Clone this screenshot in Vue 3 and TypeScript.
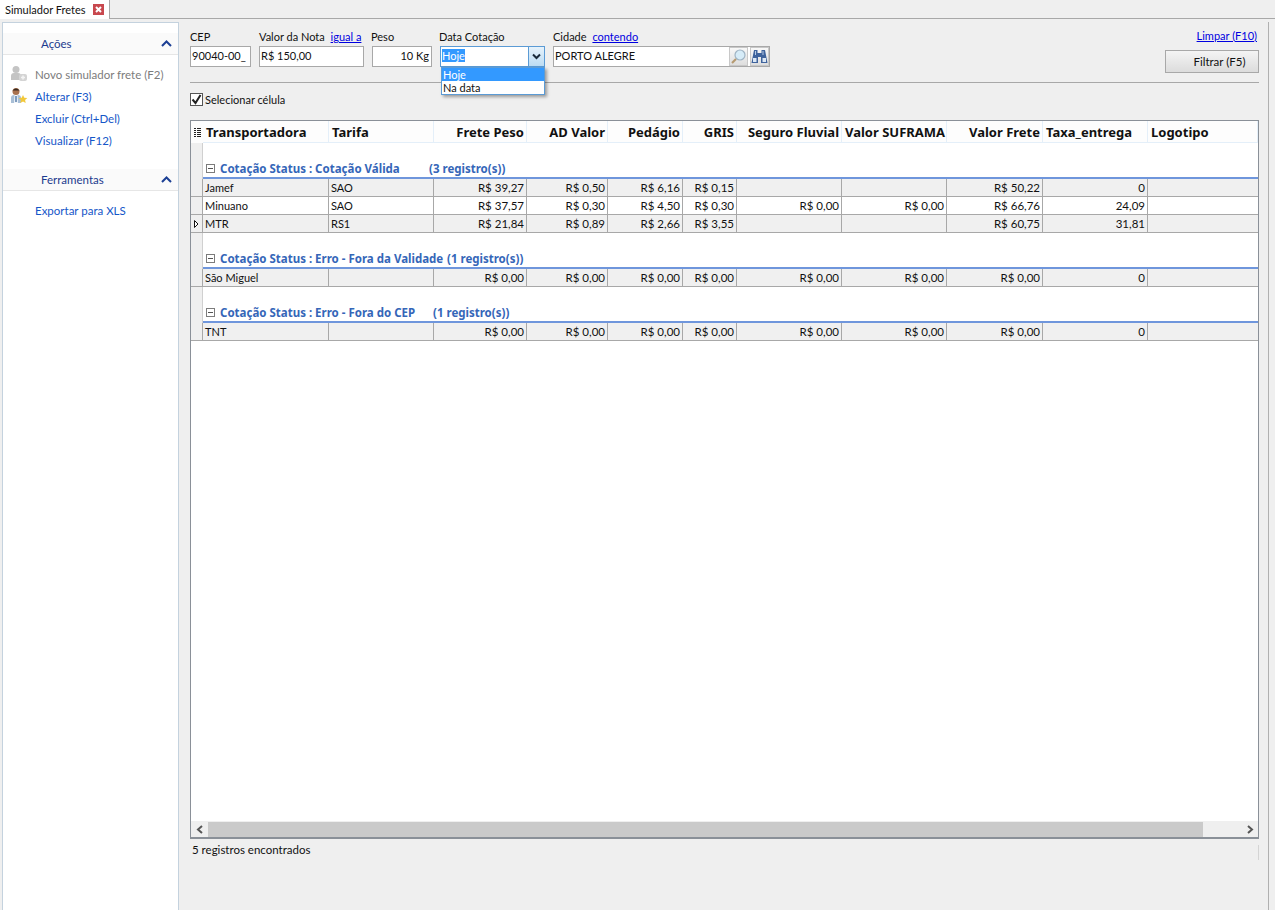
<template>
  <div class="screen">
    <div class="tabbar">
      <div class="tab">
        <span>Simulador Fretes</span>
        <span class="tab-close">
          <svg width="11" height="11" viewBox="0 0 11 11"><path d="M3 3l5 5M8 3l-5 5" stroke="#fff" stroke-width="2" /></svg>
        </span>
      </div>
    </div>

    <div class="body">
      <aside class="side">
        <section v-for="group in sideGroups" :key="group.title" class="side-group" :class="group.cls">
          <div class="side-head">
            <span>{{ group.title }}</span>
            <svg width="11" height="7" viewBox="0 0 11 7"><path d="M1 6l4.500-4.500L10 6" fill="none" stroke="#1c3f94" stroke-width="2" /></svg>
          </div>
          <ul class="side-list">
            <li v-for="item in group.items" :key="item.label" :class="{ off: item.off }">
              <span class="side-ico">
                <svg v-if="item.icon === 'new'" width="18" height="18" viewBox="0 0 18 18">
                  <circle cx="6" cy="4.500" r="3.500" fill="#c4c4c4" />
                  <path d="M1 15v-4q0-3 3-3h4q3 0 3 3v4z" fill="#c4c4c4" />
                  <rect x="9" y="9" width="8" height="7" rx="2" fill="#d4d4d4" />
                  <path d="M13 10.500v4M11 12.500h4" stroke="#f4f4f4" stroke-width="1.500" />
                </svg>
                <svg v-if="item.icon === 'edit'" width="18" height="18" viewBox="0 0 18 18">
                  <circle cx="6" cy="4.500" r="3.500" fill="#a8714e" />
                  <path d="M2.500 3.500q3.500-4 7 0z" fill="#3a2a20" />
                  <path d="M1 16v-5q0-3 3-3h4q3 0 3 3v5z" fill="#a9bfd6" />
                  <path d="M4.500 8h3l.5 8h-4z" fill="#f2f6fa" />
                  <path d="M6 9v6" stroke="#2f5f96" stroke-width="1.200" />
                  <path d="M13 8l1.300 2.700 3 .4-2.200 2 .6 2.900-2.700-1.500-2.700 1.500.6-2.900-2.200-2 3-.4z" fill="#f2c83a" />
                </svg>
              </span>
              <span>{{ item.label }}</span>
            </li>
          </ul>
        </section>
      </aside>

      <main class="main">
        <div class="filters">
          <div class="field f-cep">
            <label>CEP</label>
            <div class="input">90040-00_</div>
          </div>
          <div class="field f-nota">
            <label>Valor da Nota <a>igual a</a></label>
            <div class="input">R$ 150,00</div>
          </div>
          <div class="field f-peso">
            <label>Peso</label>
            <div class="input right">10 Kg</div>
          </div>
          <div class="field f-data">
            <label>Data Cotação</label>
            <div class="input combo">
              <span class="combo-val"><span class="sel">Hoje</span></span>
              <span class="combo-btn">
                <svg width="9" height="7" viewBox="0 0 9 7"><path d="M1 1.500l3.500 3.500L8 1.500" fill="none" stroke="#1a2a3a" stroke-width="2" /></svg>
              </span>
            </div>
            <div class="drop">
              <div class="drop-item on">Hoje</div>
              <div class="drop-item">Na data</div>
            </div>
          </div>
          <div class="field f-cidade">
            <label>Cidade <a>contendo</a></label>
            <div class="input city">
              <span class="city-val">PORTO ALEGRE</span>
              <span class="city-btn">
                <svg width="17" height="17" viewBox="0 0 17 17">
                  <circle cx="10" cy="7" r="5" fill="#d6ecf8" stroke="#9fb4c4" stroke-width="1.200" />
                  <path d="M6 11l-4 4" stroke="#b59a70" stroke-width="2.200" />
                </svg>
              </span>
              <span class="city-btn">
                <svg width="17" height="17" viewBox="0 0 17 17">
                  <path d="M3 2h3.500v3h4V2H14l2.500 13H10V9H7v6H.5z" fill="#3f639c" />
                  <rect x="2" y="10" width="3.500" height="4" fill="#dce8f5" />
                  <rect x="11.500" y="10" width="3.500" height="4" fill="#dce8f5" />
                  <rect x="4" y="3" width="1" height="4" fill="#b4cae6" />
                  <rect x="11.500" y="3" width="1" height="4" fill="#b4cae6" />
                </svg>
              </span>
            </div>
          </div>
          <div class="actions">
            <a>Limpar (F10)</a>
            <button class="btn" type="button">Filtrar (F5)</button>
          </div>
        </div>

        <div class="check-row">
          <span class="check">
            <svg width="11" height="11" viewBox="0 0 11 11"><path d="M1.500 5.500l3 3.500 5-8" fill="none" stroke="#222" stroke-width="2" /></svg>
          </span>
          <span>Selecionar célula</span>
        </div>

        <div class="grid">
          <div class="grid-head line">
            <div class="ind head-ind">
              <svg width="7" height="9" viewBox="0 0 7 9"><path d="M0 .500h2M3 .500h4M0 2.500h2M3 2.500h4M0 4.500h2M3 4.500h4M0 6.500h2M3 6.500h4M0 8.500h2M3 8.500h4" stroke="#222" stroke-width="1" /></svg>
            </div>
            <div v-for="c in columns" :key="c.name" class="hcell" :class="{ right: c.right }">{{ c.name }}</div>
          </div>

          <div class="grid-body">
            <template v-for="g in groups" :key="g.title">
              <div class="group">
                <div class="ind"></div>
                <div class="group-title">
                  <span class="minus"></span>
                  <span class="group-name" :style="{ width: g.width + 'px' }">Cotação Status : {{ g.title }}</span>
                  <span>({{ g.rows.length }} registro(s))</span>
                </div>
              </div>
              <div v-for="(r, ri) in g.rows" :key="r.vals[0]" class="line row" :class="{ alt: ri % 2 === 0 }">
                <div class="ind">
                  <svg v-if="r.current" width="5" height="8" viewBox="0 0 5 8"><path d="M.500.500L4 4 .500 7.500z" fill="#fff" stroke="#111" /></svg>
                </div>
                <div v-for="(v, i) in r.vals" :key="i" class="cell" :class="{ right: i > 1 }">{{ v }}</div>
                <div class="cell"></div>
              </div>
            </template>
          </div>

          <div class="hscroll">
            <span class="arrow">
              <svg width="8" height="9" viewBox="0 0 8 9"><path d="M6 1L2 4.500 6 8" fill="none" stroke="#555" stroke-width="2" /></svg>
            </span>
            <span class="thumb"></span>
            <span class="arrow">
              <svg width="8" height="9" viewBox="0 0 8 9"><path d="M2 1l4 3.500L2 8" fill="none" stroke="#555" stroke-width="2" /></svg>
            </span>
          </div>
        </div>

        <div class="status">5 registros encontrados</div>
      </main>
    </div>
  </div>
</template>

<script setup lang="ts">
interface SideItem {
  label: string
  icon?: string
  off?: boolean
}

interface Row {
  vals: string[]
  current?: boolean
}

const sideGroups: { title: string; cls: string; items: SideItem[] }[] = [
  {
    title: 'Ações',
    cls: 'acoes',
    items: [
      { label: 'Novo simulador frete (F2)', icon: 'new', off: true },
      { label: 'Alterar (F3)', icon: 'edit' },
      { label: 'Excluir (Ctrl+Del)' },
      { label: 'Visualizar (F12)' }
    ]
  },
  {
    title: 'Ferramentas',
    cls: 'ferr',
    items: [{ label: 'Exportar para XLS' }]
  }
]

// Taxa_entrega fica alinhado à esquerda no cabeçalho
const columns = [
  { name: 'Transportadora' },
  { name: 'Tarifa' },
  { name: 'Frete Peso', right: true },
  { name: 'AD Valor', right: true },
  { name: 'Pedágio', right: true },
  { name: 'GRIS', right: true },
  { name: 'Seguro Fluvial', right: true },
  { name: 'Valor SUFRAMA', right: true },
  { name: 'Valor Frete', right: true },
  { name: 'Taxa_entrega' },
  { name: 'Logotipo' }
]

const zero = ['R$ 0,00', 'R$ 0,00', 'R$ 0,00', 'R$ 0,00', 'R$ 0,00', 'R$ 0,00', 'R$ 0,00', '0']

const groups: { title: string; width: number; rows: Row[] }[] = [
  {
    title: 'Cotação Válida',
    width: 209,
    rows: [
      { vals: ['Jamef', 'SAO', 'R$ 39,27', 'R$ 0,50', 'R$ 6,16', 'R$ 0,15', '', '', 'R$ 50,22', '0'] },
      { vals: ['Minuano', 'SAO', 'R$ 37,57', 'R$ 0,30', 'R$ 4,50', 'R$ 0,30', 'R$ 0,00', 'R$ 0,00', 'R$ 66,76', '24,09'] },
      { vals: ['MTR', 'RS1', 'R$ 21,84', 'R$ 0,89', 'R$ 2,66', 'R$ 3,55', '', '', 'R$ 60,75', '31,81'], current: true }
    ]
  },
  {
    title: 'Erro - Fora da Validade',
    width: 227,
    rows: [{ vals: ['São Miguel', '', ...zero] }]
  },
  {
    title: 'Erro - Fora do CEP',
    width: 213,
    rows: [{ vals: ['TNT', '', ...zero] }]
  }
]
</script>

<style>
html,
body {
  margin: 0;
  background: #efefef;
}
</style>

<style scoped>
.screen {
  --cols: 12px 126px 105px 93px 81px 75px 54px 105px 105px 96px 105px 1fr;
  width: 1275px;
  height: 910px;
  display: flex;
  flex-direction: column;
  overflow: hidden;
  background: #efefef;
  color: #111;
  font-family: "Lato", "Noto Sans", sans-serif;
  font-size: 11px;
}
a {
  color: #0000e0;
  text-decoration: underline;
}

.tabbar {
  height: 19px;
  box-sizing: border-box;
  border-bottom: 1px solid #a8a8a8;
  display: flex;
}
.tab {
  width: 110px;
  height: 19px;
  box-sizing: border-box;
  background: #fff;
  border-right: 1px solid #a8a8a8;
  padding: 0 5px;
  display: flex;
  align-items: center;
  white-space: nowrap;
}
.tab-close {
  width: 11px;
  height: 11px;
  background: #c8484e;
  display: block;
  margin-left: auto;
}
.tab-close svg {
  display: block;
}

.body {
  flex: 1;
  display: flex;
  min-height: 0;
  padding: 3px 0 0 2px;
}

.side {
  width: 177px;
  box-sizing: border-box;
  background: #fff;
  border: 1px solid #c4d2de;
  border-bottom: none;
  margin-right: 1px;
  font-size: 11.5px;
}
.side-group.acoes {
  padding-top: 10px;
}
.side-group.ferr {
  padding-top: 18px;
}
.side-head {
  height: 22px;
  box-sizing: border-box;
  background: #fafafa;
  border-bottom: 1px solid #e6e6e6;
  color: #1c3a8e;
  padding: 0 6px 0 38px;
  display: flex;
  align-items: center;
  justify-content: space-between;
}
.side-list {
  list-style: none;
  margin: 0;
  padding: 8px 0 0;
}
.side-list li {
  height: 22px;
  display: flex;
  align-items: center;
  color: #1556c8;
  padding-left: 7px;
}
.side-list li.off {
  color: #7c7c7c;
}
.side-ico {
  width: 25px;
  height: 18px;
  display: block;
  flex: none;
}

.main {
  width: 1089px;
  height: 888px;
  box-sizing: border-box;
  padding: 7px 9px 0 10px;
  border-right: 1px solid #b0b0b0;
}

.filters {
  height: 54px;
  box-sizing: border-box;
  display: flex;
  border-bottom: 1px solid #a8a8a8;
}
.field {
  position: relative;
  display: flex;
  flex-direction: column;
  gap: 3px;
}
.field label {
  height: 14px;
  line-height: 15px;
  white-space: nowrap;
}
.field label a {
  margin-left: 3px;
}
.f-cep {
  width: 61px;
  margin-right: 8px;
}
.f-nota {
  width: 105px;
  margin-right: 8px;
}
.f-peso {
  width: 60px;
  margin-right: 8px;
}
.f-data {
  width: 105px;
  margin-right: 8px;
}
.f-peso label,
.f-data label {
  margin-left: -1px;
}
.f-cidade {
  width: 217px;
}
.input {
  height: 21px;
  box-sizing: border-box;
  background: #fff;
  border: 1px solid #a8a8a8;
  padding: 0 2px 0 1px;
  line-height: 18px;
  white-space: nowrap;
}
.input.right {
  text-align: right;
}
.combo {
  display: flex;
  padding: 0;
  border-color: #5b9bd5;
}
.combo-val {
  flex: 1;
  padding: 0 1px;
}
.sel {
  background: #3399ff;
  color: #fff;
}
.combo-btn {
  width: 15px;
  background: linear-gradient(#e6f2fb, #bcdcf3);
  border-left: 1px solid #5b9bd5;
  display: flex;
  align-items: center;
  justify-content: center;
}
.drop {
  position: absolute;
  top: 38px;
  left: 1px;
  width: 104px;
  box-sizing: border-box;
  background: #fff;
  border: 1px solid #5b9bd5;
  box-shadow: 2px 2px 3px rgba(0, 0, 0, 0.35);
  z-index: 5;
}
.drop-item {
  height: 13px;
  line-height: 13px;
  padding-left: 1px;
}
.drop-item.on {
  background: #3399ff;
  color: #fff;
}
.city {
  display: flex;
  align-items: center;
  padding: 0 0 0 1px;
  gap: 2px;
}
.city-val {
  flex: 1;
  margin-top: -2px;
}
.city-btn {
  width: 17px;
  height: 17px;
  display: block;
  border: 1px solid #c8c8c8;
  background: linear-gradient(#f8f8f8, #dedede);
}
.city-btn svg {
  display: block;
}
.actions {
  margin-left: auto;
  display: flex;
  flex-direction: column;
  align-items: flex-end;
  gap: 8px;
}
.actions a {
  margin-right: 2px;
}
.btn {
  width: 94px;
  height: 23px;
  box-sizing: border-box;
  border: 1px solid #a8a8a8;
  background: linear-gradient(#f4f4f4, #dcdcdc);
  color: #111;
  font: inherit;
  font-size: 11.5px;
  padding: 0 0 0 15px;
}

.check-row {
  height: 37px;
  box-sizing: border-box;
  padding-bottom: 4px;
  display: flex;
  align-items: center;
  gap: 2px;
}
.check {
  width: 11px;
  height: 11px;
  background: #fff;
  border: 1px solid #555;
  display: block;
}
.check svg {
  display: block;
}

.grid {
  height: 719px;
  box-sizing: border-box;
  border: 1px solid #8a9098;
  border-bottom-width: 2px;
  background: #fff;
  display: flex;
  flex-direction: column;
}
.line {
  display: grid;
  grid-template-columns: var(--cols);
}
.grid-head {
  height: 22px;
  background: #fdfdfd;
  flex: none;
}
.head-ind {
  background: #fdfdfd !important;
  border-right: none !important;
}
.hcell {
  font-family: "Noto Sans", sans-serif;
  font-weight: 700;
  font-size: 13px;
  color: #111;
  line-height: 23px;
  padding: 0 2px 0 3px;
  white-space: nowrap;
  overflow: hidden;
  border-right: 1px solid #e4eff9;
  border-bottom: 1px solid #e4eff9;
}
.hcell.right {
  text-align: right;
}
.grid-body {
  flex: 1;
  min-height: 0;
}
.ind {
  box-sizing: border-box;
  background: #efefef;
  border-right: 1px solid #a8a8a8;
  display: flex;
  align-items: center;
  justify-content: center;
}
.group {
  display: flex;
  height: 36px;
}
.group > .ind {
  width: 12px;
  flex: none;
  border-right: 1px solid #d0d0d0;
}
.group-title {
  flex: 1;
  box-sizing: border-box;
  border-bottom: 2px solid #6f96dc;
  display: flex;
  align-items: flex-end;
  padding: 0 0 1px 3px;
  color: #3566b8;
  font-family: "Noto Sans", sans-serif;
  font-weight: 700;
  font-size: 11.5px;
  line-height: 15px;
  white-space: nowrap;
}
.minus {
  width: 9px;
  height: 9px;
  box-sizing: border-box;
  border: 1px solid #7c7c7c;
  margin: 0 5px 3px 0;
  position: relative;
  flex: none;
}
.minus::after {
  content: "";
  position: absolute;
  left: 1px;
  right: 1px;
  top: 3px;
  height: 1px;
  background: #555;
}
.group-name {
  display: block;
  flex: none;
}
.row {
  height: 18px;
  box-sizing: border-box;
  border-bottom: 1px solid #a8a8a8;
}
.row.alt {
  background: #f0f0f0;
}
.cell {
  box-sizing: border-box;
  line-height: 17px;
  padding: 0 2px;
  border-right: 1px solid #a8a8a8;
  white-space: nowrap;
  overflow: hidden;
}
.cell.right {
  text-align: right;
  font-size: 11.5px;
}
.cell:last-child {
  border-right: none;
}
.hscroll {
  flex: none;
  height: 16px;
  background: #efefef;
  display: flex;
  align-items: center;
}
.arrow {
  width: 17px;
  display: flex;
  align-items: center;
  justify-content: center;
  flex: none;
}
.thumb {
  display: block;
  width: 995px;
  height: 15px;
  background: #cacaca;
}
.hscroll .arrow:last-child {
  margin-left: auto;
}
.status {
  margin-top: 3px;
  height: 15px;
  line-height: 15px;
  position: relative;
  padding-left: 2px;
  font-size: 11.5px;
}
.status::after {
  content: "";
  position: absolute;
  right: 0;
  top: 3px;
  height: 15px;
  width: 1px;
  background: #d4d4d4;
}
</style>
